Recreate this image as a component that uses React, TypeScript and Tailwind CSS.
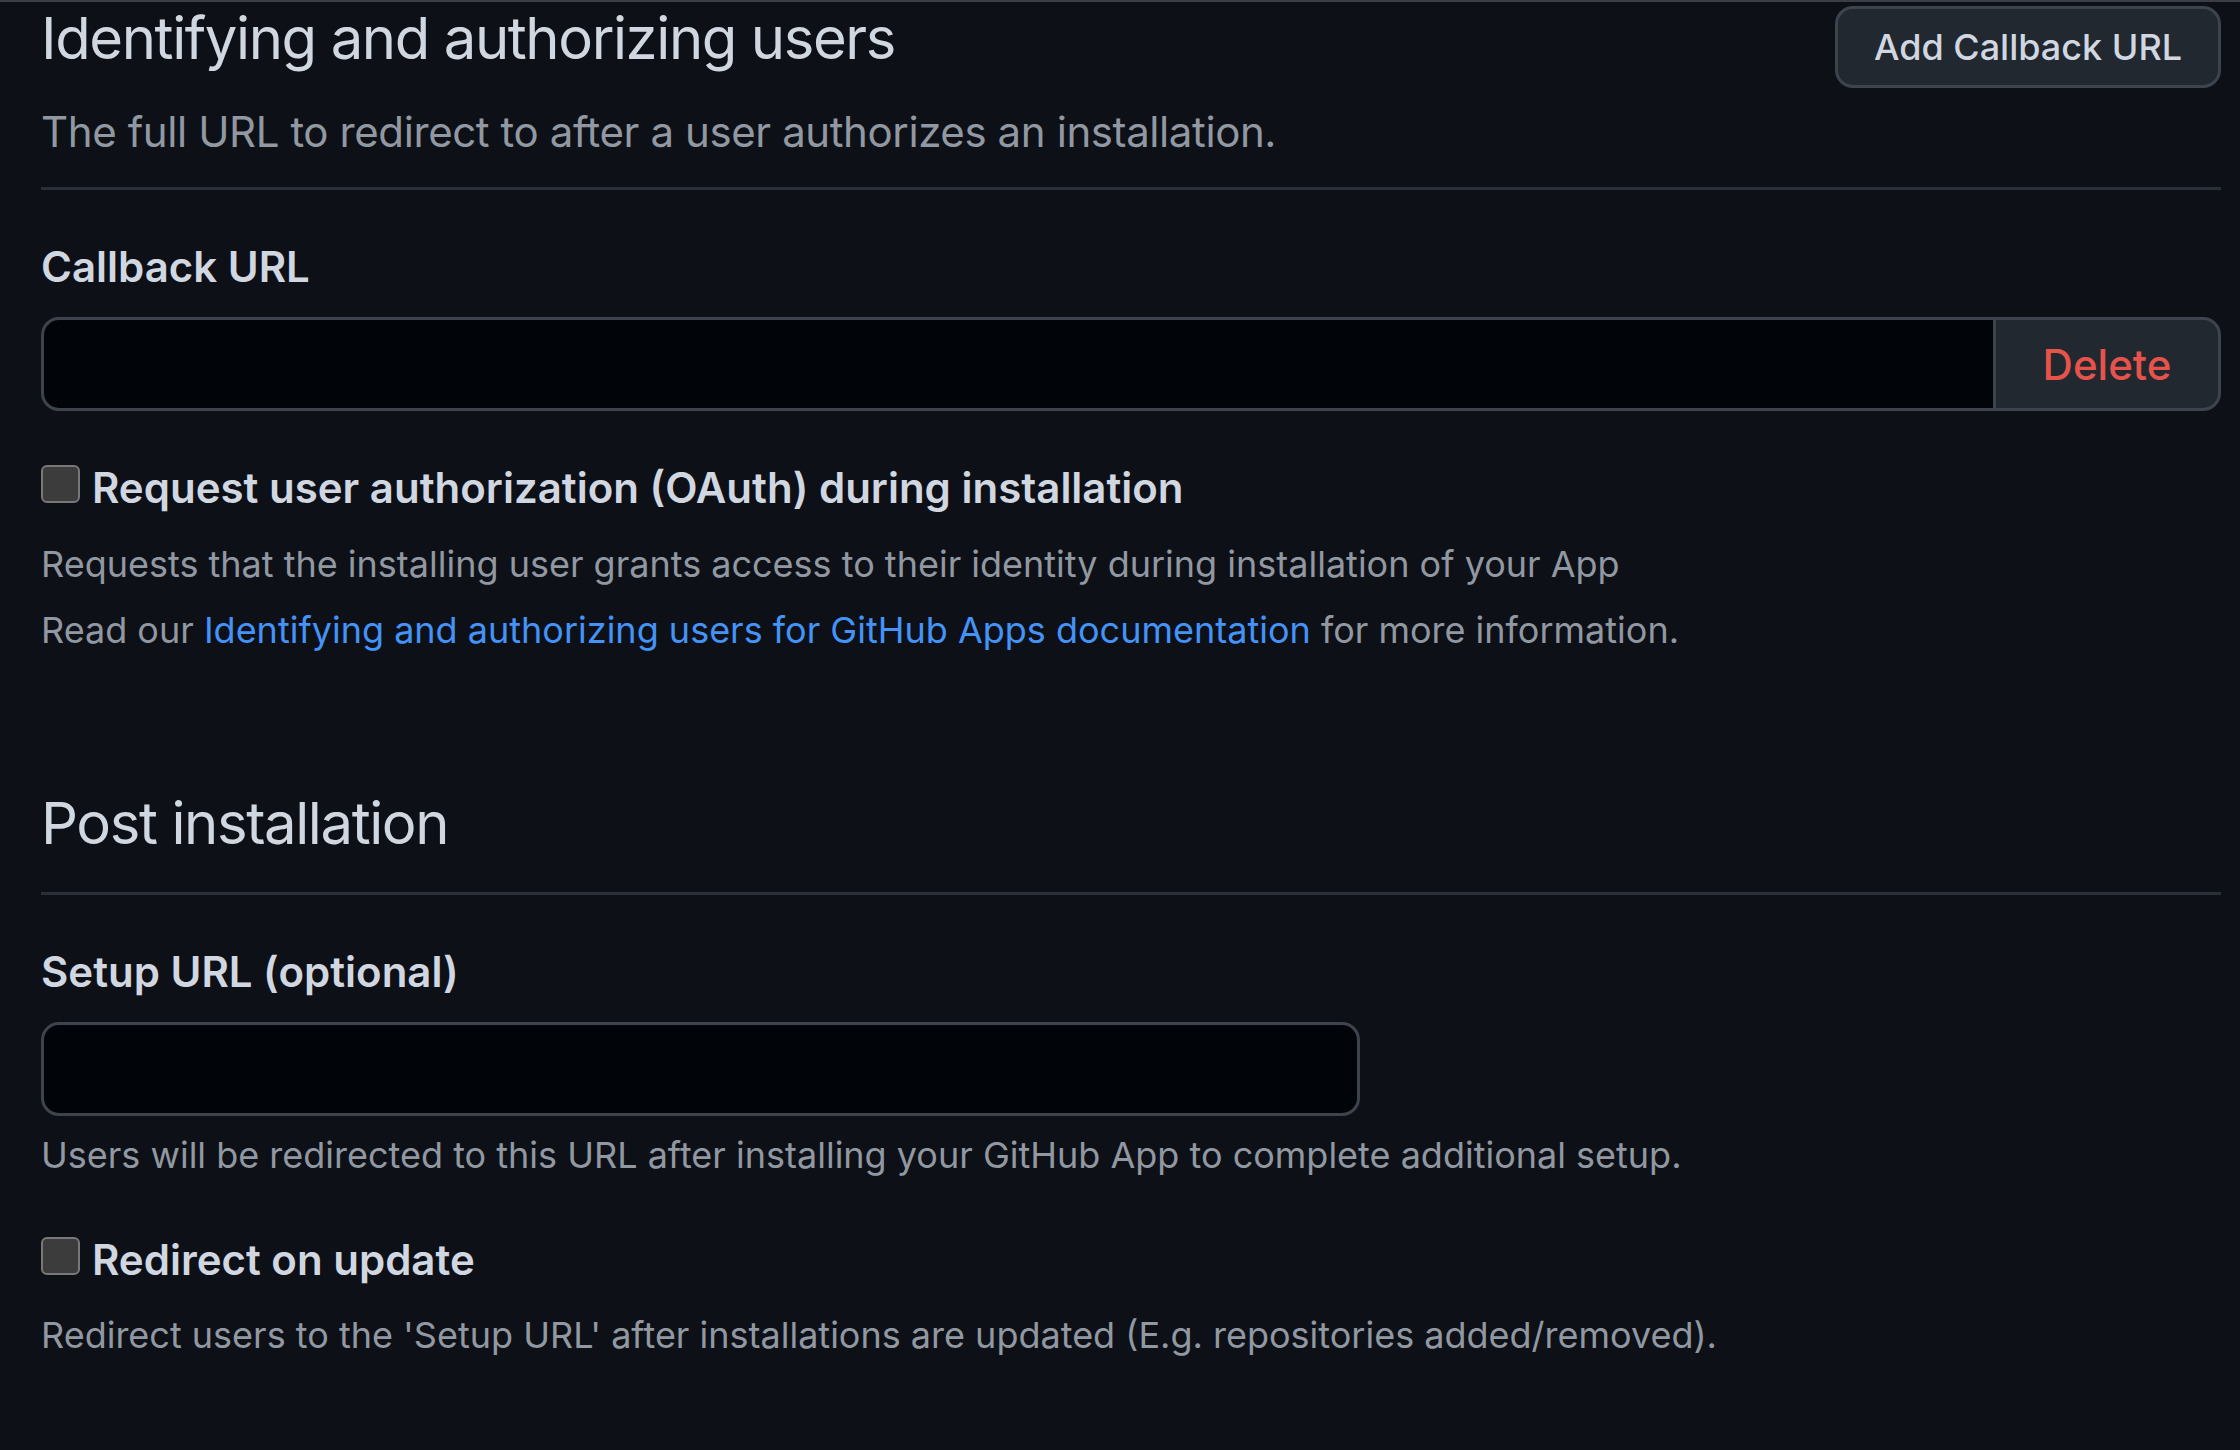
import React from 'react';

const font = { fontFamily: 'Inter, "Noto Sans", sans-serif' };

function Checkbox() {
  return (
    <input
      type="checkbox"
      className="mt-[9px] h-[38px] w-[39px] shrink-0 appearance-none rounded-[6px] border-[2.5px] border-[#787878] bg-[#3c3c3c]"
    />
  );
}

export default function App() {
  return (
    <div
      className="min-h-[1450px] w-full border-t-2 border-[#3a3f46] bg-[#0d1117] pl-[41px] pr-[19px] text-[#d1d7e0]"
      style={font}
    >
      {/* Identifying and authorizing users */}
      <div className="flex items-start justify-between border-b-[3px] border-[#2a3038] pb-[24px]">
        <div>
          <h2 className="text-[58px] font-normal leading-[72px] tracking-[-1.4px]">Identifying and authorizing users</h2>
          <p className="mt-[26px] text-[42px] leading-[63px] tracking-[-0.4px] text-[#9198a1]">
            The full URL to redirect to after a user authorizes an installation.
          </p>
        </div>
        <button className="mt-[4px] h-[82px] w-[386px] rounded-[18px] border-[3px] border-[#3d444d] bg-[#212830] text-[36px] font-medium text-[#d1d7e0]">
          Add Callback URL
        </button>
      </div>

      <label className="mt-[45px] block text-[42px] font-semibold leading-[63px]">Callback URL</label>
      <div className="mt-[19px] flex h-[94px]">
        <input
          type="text"
          className="h-full flex-1 rounded-l-[18px] border-[3px] border-r-0 border-[#3d444d] bg-[#010409] outline-none"
        />
        <button className="h-full w-[228px] rounded-r-[18px] border-[3px] border-[#3d444d] bg-[#212830] text-[42px] font-medium text-[#e5534b]">
          Delete
        </button>
      </div>

      <div className="mt-[45px] flex items-start gap-[12px]">
        <Checkbox />
        <span className="text-[42px] font-semibold leading-[63px]">Request user authorization (OAuth) during installation</span>
      </div>
      <p className="mt-[18px] text-[36px] leading-[54px] text-[#9198a1]">
        Requests that the installing user grants access to their identity during installation of your App
      </p>
      <p className="mt-[12px] text-[36px] leading-[54px] text-[#9198a1]">
        Read our <a className="text-[#4493f8]">Identifying and authorizing users for GitHub Apps documentation</a> for more
        information.
      </p>

      {/* Post installation */}
      <div className="mt-[130px] border-b-[3px] border-[#2a3038] pb-[33px]">
        <h2 className="text-[58px] font-normal leading-[72px] tracking-[-1.4px]">Post installation</h2>
      </div>

      <label className="mt-[45px] block text-[42px] font-semibold leading-[63px]">Setup URL (optional)</label>
      <input
        type="text"
        className="mt-[19px] block h-[94px] w-[1319px] rounded-[18px] border-[3px] border-[#3d444d] bg-[#010409] outline-none"
      />
      <p className="mt-[12px] text-[36px] leading-[54px] text-[#9198a1]">
        Users will be redirected to this URL after installing your GitHub App to complete additional setup.
      </p>

      <div className="mt-[46px] flex items-start gap-[12px]">
        <Checkbox />
        <span className="text-[42px] font-semibold leading-[63px]">Redirect on update</span>
      </div>
      <p className="mt-[17px] text-[36px] leading-[54px] text-[#9198a1]">
        Redirect users to the 'Setup URL' after installations are updated (E.g. repositories added/removed).
      </p>
    </div>
  );
}
